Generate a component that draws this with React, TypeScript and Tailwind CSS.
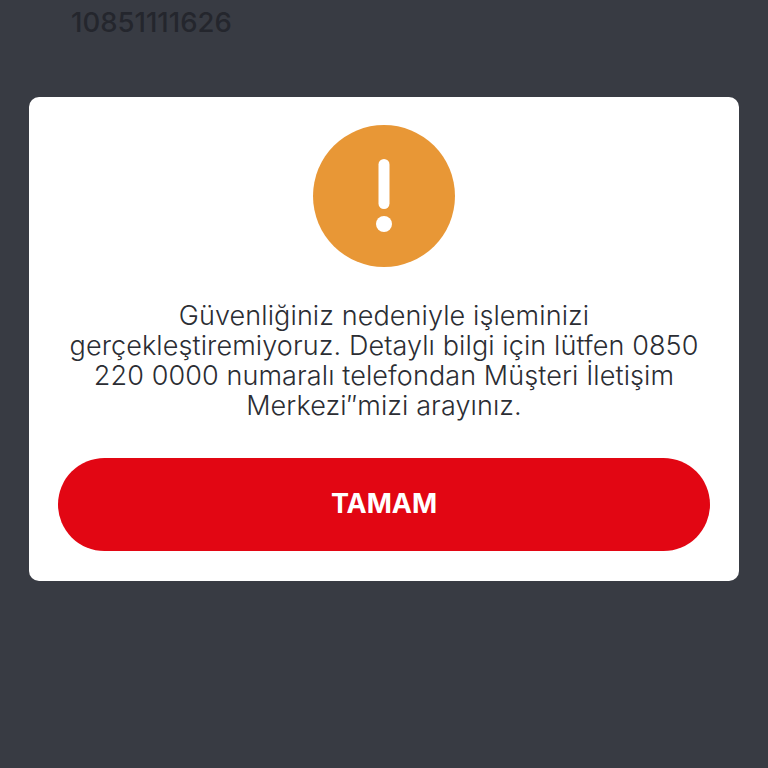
export default function App() {
  return (
    <div className="h-[768px] overflow-hidden bg-[#383b43] font-['Inter','Noto_Sans',sans-serif]">
      <div className="h-[97px] pl-[71px] pt-[4px] text-[27.5px] font-medium leading-[36px] text-[#24262d]">10851111626</div>
      <div className="mx-[29px] flex h-[484px] flex-col items-center rounded-[10px] bg-white px-[29px] pt-[28px]">
        <div className="flex h-[142px] w-[142px] items-center justify-center rounded-full bg-[#e89736]">
          <svg width="16" height="74" viewBox="0 0 16 74">
            <rect x="2.5" y="0" width="11" height="50" rx="5.5" fill="#fff" />
            <circle cx="8" cy="65" r="8" fill="#fff" />
          </svg>
        </div>
        <p className="mt-[34px] w-full text-center text-[27px] font-light leading-[30px] tracking-[0.1px] text-[#2b2d33]">
          Güvenliğiniz nedeniyle işleminizi
          <br />
          gerçekleştiremiyoruz. Detaylı bilgi için lütfen 0850
          <br />
          220 0000 numaralı telefondan Müşteri İletişim
          <br />
          Merkezi″mizi arayınız.
        </p>
        <button className="mt-[37px] flex h-[93px] w-full items-center justify-center rounded-full bg-[#e20613] text-[27px] font-bold text-white">
          TAMAM
        </button>
      </div>
    </div>
  );
}
